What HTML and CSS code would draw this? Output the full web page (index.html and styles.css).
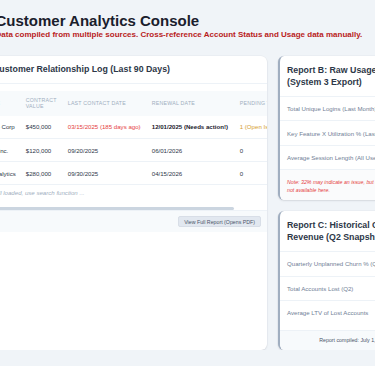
FILE: index.html
```html
<!DOCTYPE html>
<html lang="en">
<head>
<meta charset="utf-8">
<title>Customer Analytics Console</title>
<link rel="stylesheet" href="styles.css">
</head>
<body>
<div class="page">
  <header class="page-header">
    <h1 class="page-title">Customer Analytics Console</h1>
    <p class="page-warning">Data compiled from multiple sources. Cross-reference Account Status and Usage data manually.</p>
  </header>

  <div class="layout">
    <section class="card main-card">
      <div class="card-header">
        <h2 class="card-title">Customer Relationship Log (Last 90 Days)</h2>
      </div>
      <div class="card-body">
        <div class="table-scroll">
          <table class="log-table">
            <thead>
              <tr>
                <th class="col-name">Name</th>
                <th class="col-value">Contract Value</th>
                <th class="col-contact">Last Contact Date</th>
                <th class="col-renewal">Renewal Date</th>
                <th class="col-pending">Pending Tickets</th>
              </tr>
            </thead>
            <tbody>
              <tr>
                <td class="first">Acme Corp</td>
                <td>$450,000</td>
                <td class="overdue">03/15/2025 (185 days ago)</td>
                <td class="urgent">12/01/2025 (Needs action!)</td>
                <td class="pending">1 (Open Issue)</td>
              </tr>
              <tr>
                <td class="first">Beta Inc.</td>
                <td>$120,000</td>
                <td>09/20/2025</td>
                <td>06/01/2026</td>
                <td>0</td>
              </tr>
              <tr>
                <td class="first">BI Analytics</td>
                <td>$280,000</td>
                <td>09/30/2025</td>
                <td>04/15/2026</td>
                <td>0</td>
              </tr>
              <tr class="more-row">
                <td class="first" colspan="5">Not all loaded, use search function ...</td>
              </tr>
            </tbody>
          </table>
        </div>
        <div class="scroll-track" aria-hidden="true">
          <div class="scroll-thumb" style="width: 88.6%"></div>
        </div>
        <div class="card-footer">
          <button class="btn" type="button">View Full Report (Opens PDF)</button>
        </div>
      </div>
    </section>

    <aside class="side">
      <section class="card side-card">
        <div class="card-header">
          <h2 class="card-title">Report B: Raw Usage Data (System 3 Export)</h2>
        </div>
        <ul class="metric-list">
          <li class="metric"><span class="metric-label">Total Unique Logins (Last Month)</span><span class="metric-value">1,245</span></li>
          <li class="metric"><span class="metric-label">Key Feature X Utilization % (Last Month)</span><span class="metric-value">32%</span></li>
          <li class="metric"><span class="metric-label">Average Session Length (All Users)</span><span class="metric-value">4.2 min</span></li>
        </ul>
        <p class="side-note">Note: 32% may indicate an issue, but contract context is not available here.</p>
      </section>

      <section class="card side-card">
        <div class="card-header">
          <h2 class="card-title">Report C: Historical Churn &amp; Revenue (Q2 Snapshot)</h2>
        </div>
        <ul class="metric-list padded">
          <li class="metric"><span class="metric-label">Quarterly Unplanned Churn % (Q2)</span><span class="metric-value">8.5%</span></li>
          <li class="metric"><span class="metric-label">Total Accounts Lost (Q2)</span><span class="metric-value">14</span></li>
          <li class="metric"><span class="metric-label">Average LTV of Lost Accounts</span><span class="metric-value">$185,000</span></li>
        </ul>
        <p class="side-footer">Report compiled: July 1, 2025</p>
      </section>
    </aside>
  </div>
</div>
</body>
</html>
```

FILE: styles.css
```css
* { box-sizing: border-box; }

html, body {
  margin: 0;
  padding: 0;
  background: #f0f4f8;
  overflow: hidden;
}

body {
  font-family: "Liberation Sans", Arial, sans-serif;
  color: #2d3748;
}

.page {
  width: 450px;
  margin-left: -22px;
  padding-top: 11.5px;
}

.page-header {
  padding-left: 17.5px;
}

.page-title {
  margin: 0;
  font-size: 15px;
  line-height: 1.15;
  font-weight: 700;
  color: #1a202c;
}

.page-warning {
  margin: 1.5px 0 0;
  font-size: 8px;
  line-height: 1.15;
  font-weight: 700;
  color: #b91c1c;
  white-space: nowrap;
}

.layout {
  margin-top: 16.5px;
  display: grid;
  grid-template-columns: 289px 150px;
  gap: 11px;
  align-items: stretch;
}

.card {
  background: #ffffff;
  border-radius: 6px;
  box-shadow: 0 1px 2px rgba(15, 23, 42, 0.1), 0 0 0 0.5px rgba(15, 23, 42, 0.04);
  overflow: hidden;
}

.card-header {
  padding: 7.5px 15px;
  border-bottom: 1px solid #edf2f7;
}

.card-title {
  margin: 0;
  font-size: 8.8px;
  line-height: 12px;
  font-weight: 700;
  color: #2d3748;
}

/* main table card */
.card-body {
  padding-top: 7px;
}

.table-scroll {
  overflow: hidden;
  padding-bottom: 6.5px;
}

.scroll-track {
  height: 3px;
}

.scroll-thumb {
  height: 100%;
  background: #cbd5e0;
  border-radius: 2px;
}

.log-table {
  width: 326px;
  table-layout: fixed;
  border-collapse: collapse;
}

.log-table th {
  background: #f7fafc;
  padding: 6.2px 5.25px;
  font-size: 5.25px;
  line-height: 1.2;
  font-weight: 400;
  letter-spacing: 0.22px;
  text-transform: uppercase;
  text-align: left;
  color: #a0aec0;
  vertical-align: middle;
}

.log-table th.col-name { width: 42.5px; padding-left: 6.25px; }
.log-table th.col-value { width: 42px; }
.log-table th.col-contact { width: 84px; }
.log-table th.col-renewal { width: 88px; }
.log-table th.col-pending { width: 69.5px; white-space: nowrap; }

.log-table td {
  padding: 6.5px 5.25px;
  font-size: 6.1px;
  line-height: 1.5;
  color: #2d3748;
  white-space: nowrap;
  border-bottom: 1px solid #edf2f7;
}

.log-table td.first { padding-left: 6.25px; }

.log-table td.overdue { color: #e53e3e; }
.log-table td.urgent { font-weight: 700; color: #1a202c; }
.log-table td.pending { color: #d69e2e; }

.log-table .more-row td {
  border-bottom: none;
  padding-top: 3px;
  padding-bottom: 3px;
  font-style: italic;
  color: #a0aec0;
}

.card-footer {
  display: flex;
  justify-content: flex-end;
  padding: 5.5px 6px;
  background: #f7fafc;
  border-top: 1px solid #edf2f7;
}

.btn {
  font-family: inherit;
  font-size: 5.25px;
  line-height: 1.2;
  padding: 1.1px 5px;
  color: #4a5568;
  background: #e2e8f0;
  border: 1px solid #d8dee7;
  border-radius: 2px;
}

/* side column */
.side {
  display: flex;
  flex-direction: column;
  gap: 11px;
}

.side-card {
  border-left: 2px solid #a0aec0;
}

.side-card .card-header {
  padding: 8px 7px;
}

.metric-list {
  list-style: none;
  margin: 0;
  padding: 0;
}

.metric-list.padded {
  padding-bottom: 5px;
}

.metric {
  display: flex;
  justify-content: space-between;
  align-items: center;
  gap: 4px;
  padding: 7.2px 7px;
  font-size: 6.1px;
  line-height: 1.5;
  border-bottom: 1px solid #edf2f7;
}

.metric:last-child {
  border-bottom: none;
}

.metric-label {
  color: #718096;
  white-space: nowrap;
}

.metric-value {
  font-weight: 700;
  color: #2d3748;
  white-space: nowrap;
}

.side-note {
  margin: 0;
  padding: 9px 7px 6px;
  font-size: 5.25px;
  line-height: 1.4;
  font-style: italic;
  color: #e53e3e;
  background: #fafbfc;
  border-top: 1px solid #edf2f7;
}

.side-footer {
  margin: 0;
  padding: 6.5px 7px;
  font-size: 5.25px;
  line-height: 1.2;
  text-align: center;
  color: #4a5568;
  background: #f7fafc;
  border-top: 1px solid #edf2f7;
}
```
